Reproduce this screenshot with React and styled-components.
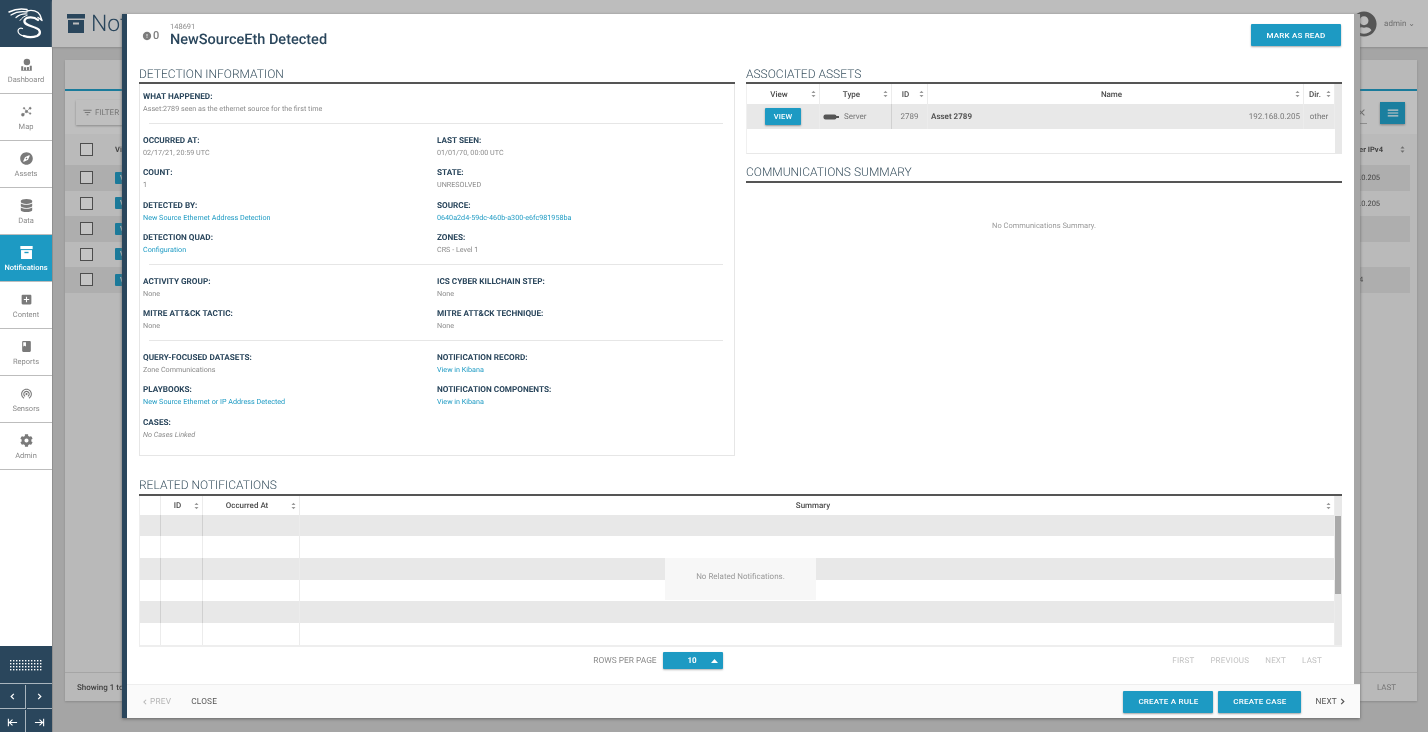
import { createGlobalStyle } from "styled-components";
import styled from "styled-components";
import { MdAddBox, MdBook, MdWifiTethering, MdFilterList, MdClose, MdMenu, MdError } from "react-icons/md";
import { FaCompass, FaDatabase, FaCog, FaUserCircle } from "react-icons/fa";

const navy = "#2a465c";
const blue = "#1d9ac3";

const Global = createGlobalStyle`
  html, body { margin: 0; height: 100%; overflow: hidden; }
  body {
    font-family: Roboto, "Liberation Sans", sans-serif;
    background: #a5a5a5;
    text-rendering: geometricPrecision;
  }
  #root { height: 100%; }
  * { box-sizing: border-box; }
`;

const Shell = styled.div`
  position: relative;
  display: flex;
  height: 732px;
  width: 1428px;
  overflow: hidden;
  will-change: transform;
`;

/* sidebar */
const Side = styled.aside`
  width: 52px;
  flex: none;
  display: flex;
  flex-direction: column;
  background: #fff;
  box-shadow: 1px 0 0 #8f8f8f;
`;

const Logo = styled.div`
  height: 47px;
  background: ${navy};
  svg { display: block; }
`;

const NavList = styled.nav`
  flex: 1;
  display: flex;
  flex-direction: column;
`;

const NavItem = styled.div`
  height: 47px;
  display: flex;
  flex-direction: column;
  align-items: center;
  padding-top: 11px;
  gap: 3px;
  border-bottom: 1px solid #bdbdbd;
  background: ${(p) => (p.$active ? blue : "#fff")};
  color: ${(p) => (p.$active ? "#fff" : "#8a8a8a")};
  font-size: 7.5px;
  font-weight: ${(p) => (p.$active ? 500 : 400)};
  line-height: 12px;
  svg { display: block; width: 13px; height: 13px; }
`;

const SideBottom = styled.div`
  height: 86px;
  background: ${navy};
  display: grid;
  grid-template-columns: 1fr 1fr;
  grid-template-rows: 38px 24px 24px;
  gap: 1px;
  color: #fff;
`;

const Keys = styled.div`
  grid-column: 1 / 3;
  display: flex;
  align-items: center;
  justify-content: center;
  border-bottom: 1px solid #a9b5be;
`;

const SideBtn = styled.div`
  display: flex;
  align-items: center;
  justify-content: center;
  border-bottom: ${(p) => (p.$last ? "0" : "1px solid #a9b5be")};
  border-right: ${(p) => (p.$edge ? "1px solid #a9b5be" : "0")};
  svg { width: ${(p) => (p.$last ? 11 : 7)}px; height: ${(p) => (p.$last ? 11 : 7)}px; }
`;

/* page behind the modal */
const Main = styled.main`
  flex: 1;
  display: flex;
  flex-direction: column;
  min-width: 0;
`;

const TopBar = styled.header`
  height: 47px;
  flex: none;
  background: #bdbdbd;
  box-shadow: 0 1px 2px #8c8c8c;
  display: flex;
  align-items: center;
  padding: 0 13px 0 15px;
  color: ${navy};
`;

const PageTitle = styled.h1`
  margin: 0;
  flex: 1;
  display: flex;
  align-items: center;
  gap: 6px;
  font-size: 23px;
  font-weight: 300;
  svg { width: 18px; height: 19px; }
`;

/* the modal hides everything past the first letters */
const PageTitleText = styled.span`
  width: 31px;
  overflow: hidden;
  white-space: nowrap;
`;

const UserBox = styled.div`
  display: flex;
  align-items: center;
  gap: 7px;
  color: #6f6f6f;
  font-size: 8px;
  svg { width: 26px; height: 26px; color: #555; }
`;

const Card = styled.section`
  margin: 13px 11px 31px 13px;
  flex: 1;
  display: flex;
  flex-direction: column;
  background: #b9b9b9;
  box-shadow: 0 1px 2px #8a8a8a;
`;

const TabBand = styled.div`
  height: 31px;
  flex: none;
  border-bottom: 2px solid #1a7b9b;
`;

const ToolRow = styled.div`
  height: 43px;
  flex: none;
  background: #bfbfbf;
  display: flex;
  align-items: center;
  justify-content: space-between;
  padding: 0 12px 0 11px;
`;

const FilterBtn = styled.div`
  width: 60px;
  height: 25px;
  display: flex;
  align-items: center;
  gap: 2px;
  padding-left: 6px;
  font-size: 8px;
  color: #777;
  background: #bfbfbf;
  box-shadow: 0 1px 2px #8a8a8a;
  svg { width: 11px; height: 11px; }
`;

const ToolRight = styled.div`
  display: flex;
  align-items: center;
  gap: 13px;
  color: #6d6d6d;
  svg { width: 11px; height: 11px; }
`;

const ClearBox = styled.span`
  display: flex;
  height: 22px;
  align-items: center;
  border-bottom: 1px solid #8d8d8d;
`;

const MenuBtn = styled.div`
  width: 25px;
  height: 22px;
  background: #1b7f9f;
  color: #c9c9c9;
  display: flex;
  align-items: center;
  justify-content: center;
  box-shadow: 0 1px 2px #808080;
  svg { width: 14px; height: 14px; }
`;

const BackTable = styled.div`
  flex: 1;
  margin-right: 7px;
`;

const BackRow = styled.div`
  height: ${(p) => (p.$head ? "31px" : "25.5px")};
  display: flex;
  align-items: center;
  justify-content: space-between;
  background: ${(p) => (p.$dark ? "#aeaeae" : "#bababa")};
  padding: 0 0 0 15px;
  font-size: 7.5px;
  font-weight: ${(p) => (p.$head ? 700 : 400)};
  color: #444;
`;

const BackCheck = styled.span`
  display: flex;
  align-items: center;
  gap: 22px;
`;

const Tick = styled.i`
  display: block;
  width: 13px;
  height: 13px;
  border: 1px solid #4d4d4d;
  background: #c4c4c4;
`;

const BackView = styled.b`
  display: block;
  width: 30px;
  height: 12px;
  border-radius: 1px;
  background: #1b7a9a;
  color: #c5c5c5;
  font-size: 7px;
  line-height: 12px;
  padding-left: 5px;
`;

const BackLast = styled.span`
  width: 78px;
  display: flex;
  justify-content: space-between;
  align-items: center;
  padding-right: 5px;
`;

const BackHeadLast = styled(BackLast)`
  padding-left: 10px;
`;

const CardFoot = styled.div`
  height: 29px;
  flex: none;
  border-top: 1px solid #a5a5a5;
  display: flex;
  align-items: center;
  justify-content: space-between;
  padding: 0 21px 0 12px;
  font-size: 8px;
  font-weight: 500;
  color: #3f3f3f;
  em { font-style: normal; font-weight: 400; color: #777; }
`;

/* modal */
const Modal = styled.div`
  position: absolute;
  left: 122px;
  top: 14px;
  width: 1238px;
  height: 704px;
  display: flex;
  flex-direction: column;
  background: #fff;
  border-left: 5px solid ${navy};
  box-shadow: 0 1px 3px #666;
`;

const ModalBody = styled.div`
  position: relative;
  flex: 1;
  min-height: 0;
  padding: 0 12px;
  border-right: 6px solid #a6a6a6;
`;

const ModalHead = styled.div`
  height: 50px;
  display: flex;
  align-items: flex-start;
  padding: 8px 1px 0 3px;
`;

const Count = styled.div`
  width: 28px;
  margin-top: 7px;
  display: flex;
  align-items: center;
  gap: 1px;
  font-size: 11px;
  font-weight: 500;
  color: #7d7d7d;
  svg { width: 10px; height: 10px; }
`;

const TitleBlock = styled.div`
  flex: 1;
  color: ${navy};
  small { display: block; font-size: 7.5px; line-height: 9px; color: #8c8c8c; }
  h2 { margin: 0; font-size: 14.500px; font-weight: 500; line-height: 17px; }
`;

const Button = styled.button`
  border: 0;
  border-radius: 1px;
  height: 22px;
  width: ${(p) => p.$w}px;
  padding: 0;
  background: ${blue};
  color: #fff;
  font: 500 8px Roboto, sans-serif;
  letter-spacing: 0.2px;
  box-shadow: 0 1px 2px rgba(0, 0, 0, 0.35);
`;

const MarkRead = styled(Button)`
  margin-top: 2px;
`;

const Columns = styled.div`
  display: grid;
  grid-template-columns: 596px 596px;
  column-gap: 11px;
  height: 397px;
`;

const SectionTitle = styled.h3`
  margin: 0;
  height: 20px;
  font-size: 12px;
  font-weight: 300;
  line-height: 20px;
  color: #38505f;
  border-bottom: 2px solid #555;
`;

const InfoBox = styled.div`
  height: 372px;
  padding: 7px 8px 0 3px;
  border: 1px solid #e6e6e6;
  border-top: 0;
`;

const Field = styled.div`
  height: 32.500px;
`;

const FieldLabel = styled.div`
  font-size: 8.200px;
  font-weight: 700;
  color: ${navy};
  line-height: 12px;
`;

const FieldValue = styled.div`
  font-size: 7.200px;
  line-height: 11px;
  color: ${(p) => (p.$link ? blue : "#8a8a8a")};
  font-style: ${(p) => (p.$italic ? "italic" : "normal")};
`;

const Rule = styled.hr`
  border: 0;
  border-top: 1px solid #e6e6e6;
  margin: -1px 3px 11px 6px;
`;

const FieldGrid = styled.div`
  display: grid;
  grid-template-columns: 294px 1fr;
`;

const AssetRow = styled.div`
  display: grid;
  grid-template-columns: 73px 72px 36px 1fr 31px 7px;
  height: ${(p) => p.$h}px;
  background: ${(p) => (p.$gray ? "#e8e8e8" : "#fff")};
  font-size: 8px;
  color: #777;
`;

const RelatedRow = styled.div`
  display: grid;
  grid-template-columns: 21px 42px 97px 1fr 7px;
  height: ${(p) => p.$h}px;
  background: ${(p) => (p.$gray ? "#e8e8e8" : "#fff")};
  font-size: 8px;
`;

const Cell = styled.div`
  display: flex;
  align-items: center;
  justify-content: ${(p) => p.$justify || "flex-start"};
  gap: 5px;
  padding: 0 3px;
  border-right: 1px solid ${(p) => (p.$strong ? "#d0d0d0" : "#ececec")};
  min-width: 0;
  white-space: nowrap;
`;

const HeadCell = styled(Cell)`
  justify-content: center;
  padding: 0 11px 0 3px;
  font-weight: 500;
  color: #4a4a4a;
  position: relative;
`;

const SortMark = styled.svg`
  position: absolute;
  right: 3px;
  top: 50%;
  transform: translateY(-50%);
  width: 5px;
  height: 7px;
  fill: #999;
`;

const BackSortMark = styled.svg`
  width: 5px;
  height: 7px;
  fill: #6d6d6d;
`;

const Gutter = styled.div`
  background: ${(p) => (p.$plain ? "#fff" : "#e8e8e8")};
`;

const AssetTable = styled.div`
  border-bottom: 1px solid #e8e8e8;
  border-left: 1px solid #f0f0f0;
  height: 70px;
`;

const ViewBtn = styled(Button)`
  height: 17px;
  font-size: 7.500px;
`;

const AssetName = styled.span`
  flex: 1;
  font-weight: 700;
  color: #555;
`;

const CommTitle = styled(SectionTitle)`
  margin-top: 8px;
  height: 21px;
`;

const Empty = styled.div`
  margin-top: 38px;
  text-align: center;
  font-size: 7.500px;
  color: #999;
`;

const RelatedTitle = styled(SectionTitle)`
  margin-top: 14px;
  height: 21px;
`;

const RelatedTable = styled.div`
  position: relative;
  height: 151px;
  border-bottom: 2px solid #eee;
  border-left: 1px solid #eee;
`;

const Thumb = styled.div`
  position: absolute;
  right: 1px;
  top: 20px;
  width: 6px;
  height: 78px;
  background: #a9a9a9;
`;

const NoData = styled.div`
  position: absolute;
  left: 525px;
  top: 62px;
  width: 151px;
  height: 42px;
  display: flex;
  align-items: center;
  justify-content: center;
  padding-bottom: 6px;
  background: #f7f7f7;
  font-size: 8px;
  color: #999;
`;

const Pager = styled.div`
  display: flex;
  align-items: center;
  height: 27px;
  position: relative;
  justify-content: center;
  gap: 6px;
  padding-right: 165px;
  font-size: 8.400px;
  color: #8a8a8a;
`;

const RowsSelect = styled.div`
  width: 60px;
  height: 17px;
  background: ${blue};
  color: #fff;
  font-size: 8px;
  font-weight: 700;
  display: flex;
  align-items: center;
  justify-content: flex-end;
  gap: 14px;
  padding-right: 5px;
  border-radius: 1px;
  box-shadow: 0 1px 2px rgba(0, 0, 0, 0.3);
`;

const PagerLinks = styled.div`
  position: absolute;
  right: 20px;
  top: 9px;
  display: flex;
  gap: 16px;
  font-size: 8px;
  letter-spacing: 0.2px;
  color: #c2c2c2;
`;

const ModalFoot = styled.footer`
  height: 34px;
  flex: none;
  background: #fafafa;
  border-top: 1px solid #eee;
  display: flex;
  align-items: center;
  padding: 0 14px 0 15px;
  font-size: 8.300px;
`;

const FootLink = styled.span`
  display: flex;
  align-items: center;
  gap: 2px;
  letter-spacing: 0.2px;
  color: ${(p) => (p.$muted ? "#b5b5b5" : "#555")};
  margin-right: ${(p) => p.$mr || 0}px;
`;

const FootRight = styled.div`
  margin-left: auto;
  display: flex;
  align-items: center;
  gap: 5px;
  span { margin-left: 9px; }
`;

const Chevron = ({ dir = "right", size = 7 }) => (
  <svg width={size} height={size} viewBox="0 0 8 8" fill="none" stroke="currentColor" strokeWidth="1.4">
    <path d={dir === "right" ? "M2.5 1l3 3-3 3" : "M5.5 1l-3 3 3 3"} />
  </svg>
);

const sortPath = "M3 0l2.4 2.8H.6zM3 8L.6 5.2h4.8z";

const Sort = () => (
  <SortMark viewBox="0 0 6 8">
    <path d={sortPath} />
  </SortMark>
);

const ArchiveIcon = ({ color = "currentColor", slot = "#bdbdbd" }) => (
  <svg viewBox="0 0 18 19" fill={color}>
    <rect x="0" y="0" width="18" height="4.500" />
    <rect x="1" y="6" width="16" height="13" />
    <rect x="6" y="8.500" width="6" height="2" fill={slot} />
  </svg>
);

const DashIcon = () => (
  <svg viewBox="0 0 16 16" fill="#7a7a7a">
    <circle cx="8.500" cy="5" r="4" />
    <path d="M1.500 10h2.500v5H1.500zM5 11.500h2.500V15H5zM8.500 11h2.500v4H8.500zM12 9.500h2.500V15H12z" />
    <path d="M1.500 15h13v.8h-13z" />
  </svg>
);

const MapIcon = () => (
  <svg viewBox="0 0 16 16" fill="#7a7a7a" stroke="#7a7a7a" strokeWidth="0.6">
    <path d="M3 12.5L8 8M8 8l4-4M8 8l-3-4.500M8 8l4.500 2.500" />
    <circle cx="3.500" cy="12" r="1.800" />
    <circle cx="8" cy="8" r="1.500" />
    <circle cx="12.500" cy="4" r="1.300" />
    <circle cx="5" cy="4" r="1" />
    <circle cx="12.500" cy="10.500" r="1" />
  </svg>
);

const LogoMark = () => (
  <svg width="52" height="47" viewBox="0 0 52 47" fill="none" stroke="#fff" strokeLinecap="round" strokeLinejoin="round">
    <path d="M9 12C14 9.500 20 8 27 9.500" strokeWidth="1.500" />
    <path d="M11 15C15 12.500 21 11 27 12" strokeWidth="1.300" />
    <path d="M16 17.500C19 15 23 13.500 27 14" strokeWidth="1.200" />
    <path d="M20 20.500C22 18 24 16 27 15.500" strokeWidth="1" />
    <path d="M27 11C32 9.500 38 11 40 15L42 20.500L38 17.500" strokeWidth="1.400" />
    <path d="M38 20C34 16.500 26 16.500 24.500 20.500C23.500 25 32 26 36 28C41 30 41 34 37 36C33 37.500 28 37.500 24 36" strokeWidth="2.300" />
    <path d="M24 36C21 35.500 18 33.500 18 31C18 28.500 20.500 27.500 22.500 28.500" strokeWidth="1.200" />
  </svg>
);

const KeyDots = () => (
  <svg width="32" height="12" viewBox="0 0 32 12" fill="#fff">
    {[1, 4, 7, 10].flatMap((y) =>
      [0, 3, 6, 9, 12, 15, 18, 21, 24, 27, 30].map((x) => <rect key={`${x}-${y}`} x={x} y={y} width="1.400" height="1.400" />)
    )}
  </svg>
);

const EdgeArrow = ({ flip }) => (
  <svg viewBox="0 0 12 12" fill="none" stroke="currentColor" strokeWidth="1.200" style={flip ? { transform: "scaleX(-1)" } : undefined}>
    <path d="M1.500 2v8M11 6H2.500M6 2.800L2.500 6 6 9.200" />
  </svg>
);

const navItems = [
  ["Dashboard", <DashIcon key="d" />],
  ["Map", <MapIcon key="m" />],
  ["Assets", <FaCompass key="a" color="#7a7a7a" />],
  ["Data", <FaDatabase key="da" color="#7a7a7a" />],
  ["Notifications", <ArchiveIcon key="n" color="#fff" slot={blue} />, true],
  ["Content", <MdAddBox key="c" color="#7a7a7a" />],
  ["Reports", <MdBook key="r" color="#7a7a7a" />],
  ["Sensors", <MdWifiTethering key="s" color="#7a7a7a" />],
  ["Admin", <FaCog key="ad" color="#7a7a7a" />],
];

const detailGroups = [
  [
    [
      { label: "OCCURRED AT:", value: "02/17/21, 20:59 UTC" },
      { label: "LAST SEEN:", value: "01/01/70, 00:00 UTC" },
    ],
    [
      { label: "COUNT:", value: "1" },
      { label: "STATE:", value: "UNRESOLVED" },
    ],
    [
      { label: "DETECTED BY:", value: "New Source Ethernet Address Detection", link: true },
      { label: "SOURCE:", value: "0640a2d4-59dc-460b-a300-e6fc981958ba", link: true },
    ],
    [
      { label: "DETECTION QUAD:", value: "Configuration", link: true },
      { label: "ZONES:", value: "CRS - Level 1" },
    ],
  ],
  [
    [
      { label: "ACTIVITY GROUP:", value: "None" },
      { label: "ICS CYBER KILLCHAIN STEP:", value: "None" },
    ],
    [
      { label: "MITRE ATT&CK TACTIC:", value: "None" },
      { label: "MITRE ATT&CK TECHNIQUE:", value: "None" },
    ],
  ],
  [
    [
      { label: "QUERY-FOCUSED DATASETS:", value: "Zone Communications" },
      { label: "NOTIFICATION RECORD:", value: "View in Kibana", link: true },
    ],
    [
      { label: "PLAYBOOKS:", value: "New Source Ethernet or IP Address Detected", link: true },
      { label: "NOTIFICATION COMPONENTS:", value: "View in Kibana", link: true },
    ],
    [{ label: "CASES:", value: "No Cases Linked", italic: true }],
  ],
];

const backRows = [
  ["192.168.0.205", true],
  ["192.168.0.205", false],
  ["", true],
  ["", false],
  ["10.10.0.4", true],
];

const relatedRows = [
  [21, true],
  [22, false],
  [22, true],
  [21, false],
  [22, true],
  [22, false],
];

const DetailField = ({ label, value, link, italic }) => (
  <Field>
    <FieldLabel>{label}</FieldLabel>
    <FieldValue $link={link} $italic={italic}>
      {value}
    </FieldValue>
  </Field>
);

export default function App() {
  return (
    <Shell>
      <Global />
      <Side>
        <Logo>
          <LogoMark />
        </Logo>
        <NavList>
          {navItems.map(([label, icon, active]) => (
            <NavItem key={label} $active={active}>
              {icon}
              {label}
            </NavItem>
          ))}
        </NavList>
        <SideBottom>
          <Keys>
            <KeyDots />
          </Keys>
          <SideBtn $edge>
            <Chevron dir="left" />
          </SideBtn>
          <SideBtn>
            <Chevron />
          </SideBtn>
          <SideBtn $edge $last>
            <EdgeArrow />
          </SideBtn>
          <SideBtn $last>
            <EdgeArrow flip />
          </SideBtn>
        </SideBottom>
      </Side>

      <Main>
        <TopBar>
          <PageTitle>
            <ArchiveIcon />
            <PageTitleText>Notifications</PageTitleText>
          </PageTitle>
          <UserBox>
            <FaUserCircle />
            admin ⌄
          </UserBox>
        </TopBar>
        <Card>
          <TabBand />
          <ToolRow>
            <FilterBtn>
              <MdFilterList />
              FILTER
            </FilterBtn>
            <ToolRight>
              <ClearBox>
                <MdClose />
              </ClearBox>
              <MenuBtn>
                <MdMenu />
              </MenuBtn>
            </ToolRight>
          </ToolRow>
          <BackTable>
            <BackRow $head>
              <BackCheck>
                <Tick />
                View
              </BackCheck>
              <BackHeadLast>
                Sender IPv4
                <BackSortMark viewBox="0 0 6 8">
                  <path d={sortPath} />
                </BackSortMark>
              </BackHeadLast>
            </BackRow>
            {backRows.map(([ip, dark], i) => (
              <BackRow key={i} $dark={dark}>
                <BackCheck>
                  <Tick />
                  <BackView>VIEW</BackView>
                </BackCheck>
                <BackLast>{ip}</BackLast>
              </BackRow>
            ))}
          </BackTable>
          <CardFoot>
            <span>Showing 1 to 5 of 5 entries</span>
            <em>LAST</em>
          </CardFoot>
        </Card>
      </Main>

      <Modal>
        <ModalBody>
          <ModalHead>
            <Count>
              <MdError />0
            </Count>
            <TitleBlock>
              <small>148691</small>
              <h2>NewSourceEth Detected</h2>
            </TitleBlock>
            <MarkRead $w={90}>MARK AS READ</MarkRead>
          </ModalHead>

          <Columns>
            <div>
              <SectionTitle>DETECTION INFORMATION</SectionTitle>
              <InfoBox>
                <DetailField label="WHAT HAPPENED:" value="Asset:2789 seen as the ethernet source for the first time" />
                {detailGroups.map((group, g) => (
                  <div key={g}>
                    <Rule />
                    {group.map((pair, r) => (
                      <FieldGrid key={r}>
                        {pair.map((f) => (
                          <DetailField key={f.label} {...f} />
                        ))}
                      </FieldGrid>
                    ))}
                  </div>
                ))}
              </InfoBox>
            </div>
            <div>
              <SectionTitle>ASSOCIATED ASSETS</SectionTitle>
              <AssetTable>
                <AssetRow $h={20}>
                  <HeadCell>View<Sort /></HeadCell>
                  <HeadCell>Type<Sort /></HeadCell>
                  <HeadCell>ID<Sort /></HeadCell>
                  <HeadCell>Name<Sort /></HeadCell>
                  <HeadCell>Dir.<Sort /></HeadCell>
                  <Gutter />
                </AssetRow>
                <AssetRow $h={25} $gray>
                  <Cell $justify="center">
                    <ViewBtn $w={36}>VIEW</ViewBtn>
                  </Cell>
                  <Cell $strong>
                    <svg width="16" height="6" viewBox="0 0 16 6" fill="#555">
                      <rect x="0.500" y="0.500" width="13" height="5" rx="2" />
                      <rect x="13" y="2" width="3" height="2" />
                    </svg>
                    Server
                  </Cell>
                  <Cell $justify="center">2789</Cell>
                  <Cell>
                    <AssetName>Asset 2789</AssetName>
                    192.168.0.205
                  </Cell>
                  <Cell $justify="center">other</Cell>
                  <Gutter />
                </AssetRow>
                <AssetRow $h={24}>
                  <Gutter $plain />
                  <Gutter $plain />
                  <Gutter $plain />
                  <Gutter $plain />
                  <Gutter $plain />
                  <Gutter />
                </AssetRow>
              </AssetTable>
              <CommTitle>COMMUNICATIONS SUMMARY</CommTitle>
              <Empty>No Communications Summary.</Empty>
            </div>
          </Columns>

          <RelatedTitle>RELATED NOTIFICATIONS</RelatedTitle>
          <RelatedTable>
            <RelatedRow $h={19}>
              <HeadCell />
              <HeadCell>ID<Sort /></HeadCell>
              <HeadCell>Occurred At<Sort /></HeadCell>
              <HeadCell>Summary<Sort /></HeadCell>
              <Gutter />
            </RelatedRow>
            {relatedRows.map(([h, gray], i) => (
              <RelatedRow key={i} $h={h} $gray={gray}>
                <Cell $strong={gray} />
                <Cell $strong={gray} />
                <Cell />
                <Cell />
                <Gutter />
              </RelatedRow>
            ))}
            <Thumb />
            <NoData>No Related Notifications.</NoData>
          </RelatedTable>
          <Pager>
            ROWS PER PAGE
            <RowsSelect>
              10
              <svg width="7" height="4" viewBox="0 0 7 4" fill="#fff">
                <path d="M3.500 0L7 4H0z" />
              </svg>
            </RowsSelect>
            <PagerLinks>
              <span>FIRST</span>
              <span>PREVIOUS</span>
              <span>NEXT</span>
              <span>LAST</span>
            </PagerLinks>
          </Pager>
        </ModalBody>
        <ModalFoot>
          <FootLink $muted $mr={20}>
            <Chevron dir="left" size={6} />
            PREV
          </FootLink>
          <FootLink>CLOSE</FootLink>
          <FootRight>
            <Button $w={90}>CREATE A RULE</Button>
            <Button $w={83}>CREATE CASE</Button>
            <FootLink>
              NEXT
              <Chevron size={7} />
            </FootLink>
          </FootRight>
        </ModalFoot>
      </Modal>
    </Shell>
  );
}
